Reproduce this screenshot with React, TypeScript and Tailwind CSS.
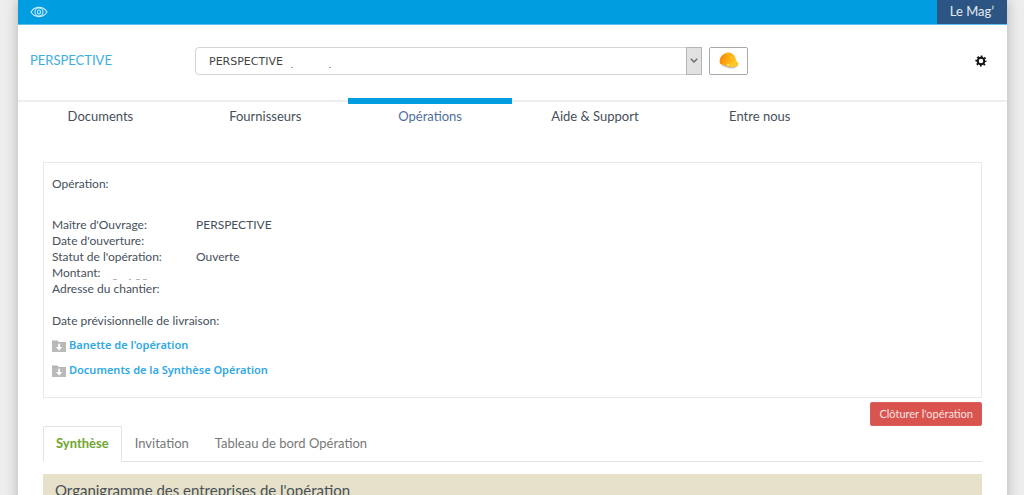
import React from "react";

const NAV = [
    { label: "Documents", active: false },
    { label: "Fournisseurs", active: false },
    { label: "Opérations", active: true },
    { label: "Aide & Support", active: false },
    { label: "Entre nous", active: false },
];

const DETAILS = [
    { label: "Maître d'Ouvrage:", value: "PERSPECTIVE" },
    { label: "Date d'ouverture:", value: "" },
    { label: "Statut de l'opération:", value: "Ouverte" },
    { label: "Montant:", value: "", masked: true },
    { label: "Adresse du chantier:", value: "" },
];

const LINKS = ["Banette de l'opération", "Documents de la Synthèse Opération"];

const TABS = [
    { label: "Synthèse", active: true },
    { label: "Invitation", active: false },
    { label: "Tableau de bord Opération", active: false },
];

const EyeIcon = () => (
    <svg viewBox="0 0 18 12" className="h-3 w-[18px]" fill="none" stroke="#c9ecfb" strokeWidth="1.1">
        <path d="M1 6C3 2.6 5.8 1.4 9 1.4S15 2.6 17 6c-2 3.4-4.8 4.6-8 4.6S3 9.4 1 6z" />
        <ellipse cx="9" cy="6" rx="4" ry="4" />
        <ellipse cx="9" cy="6" rx="1.5" ry="2" />
    </svg>
);

const HelmetIcon = () => (
    <svg viewBox="0 0 20 17" className="h-[17px] w-5">
        <defs>
            <linearGradient id="shell" x1="0" y1="0" x2="1" y2="0.3">
                <stop offset="0" stopColor="#f57a0a" />
                <stop offset="0.45" stopColor="#ffa70f" />
                <stop offset="1" stopColor="#ffc928" />
            </linearGradient>
        </defs>
        <path d="M2 13.5c4 1.5 8 3.3 11 3 3 0 5-1.5 6.5-3.5L14 11z" fill="#a9adb8" opacity="0.7" />
        <path d="M.7 10.5C.3 5.5 3.5 1.5 8 .7c5-.7 8.500 3 9.300 8.300l2 2.600c.4.9-.2 1.700-1.300 2.200-2 1-3.700 1.600-5.500 1.500C8.500 14.700 4.500 13.500 1.300 12z" fill="url(#shell)" />
        <path d="M8.500 12.300c2.500-.2 5.500-1.500 8.800-3.300l2 2.600c-1.800 1.700-4.500 2.800-7.300 2.700-1.500-.2-2.700-.8-3.500-2z" fill="#ffcb22" />
        <path d="M7 1.500c2.500.5 4.500 2.500 5 5.500" fill="none" stroke="#ffc02a" strokeWidth="1" />
        <circle cx="9" cy="12.700" r="1" fill="#fff0b0" />
    </svg>
);

const GearIcon = () => (
    <svg viewBox="0 0 12 12" className="h-3 w-3" fill="none" stroke="#111">
        <circle cx="6" cy="6" r="3.3" strokeWidth="2" />
        <circle cx="6" cy="6" r="4.8" strokeWidth="1.6" strokeDasharray="1.885 1.885" strokeDashoffset="0.94" />
    </svg>
);

const FolderIcon = () => (
    <svg viewBox="0 0 14 12" className="h-3 w-[14px]">
        <path d="M0 .5h5.500L6.500 2H14v1H0z" fill="#b5b5b5" />
        <path d="M0 3h14v9H0z" fill="#bababa" />
        <path d="M6.200 3.700h1.900v3.300h2.200L7.200 10.400 4 7h2.200z" fill="#fff" />
    </svg>
);

// Descenders left visible under the masked amount
const MaskedAmount = () => (
    <svg viewBox="0 0 38 2" className="ml-3 inline-block h-0.5 w-[38px] align-bottom" fill="#b4b8bc">
        <path d="M0 0h4v1H0zM16 0h2v1h-2zM23 0h4v1h-4zM30 0h4v1h-4z" />
    </svg>
);

export default function App() {
    return (
        <div className="min-h-screen bg-[#ededed] pl-[18px] pr-[17px] font-['Lato','Open_Sans',sans-serif] text-[13px] text-[#46505a]">
            <div className="min-h-screen bg-white shadow-[0_0_12px_rgba(0,0,0,0.25)]">
                <div className="flex h-[25px] items-stretch justify-between border-b border-[#5cbfec] bg-[#009de0]">
                    <button type="button" aria-label="Affichage" className="pl-3">
                        <EyeIcon />
                    </button>
                    <a href="#mag" className="flex items-center bg-[#2d5583] px-[13px] text-[#e3eaf2]">
                        Le Mag’
                    </a>
                </div>

                <header className="flex h-[75px] items-center px-3 pb-1">
                    <a href="#perspective" className="w-[165px] shrink-0 text-[#3bade4]">
                        PERSPECTIVE
                    </a>
                    <div className="relative w-[507px]">
                        <select
                            aria-label="Entreprise"
                            className="block h-7 w-full appearance-none rounded-sm border border-[#d4d4d4] bg-white pl-[13px] pr-5 pt-[3px] font-['DejaVu_Sans',sans-serif] text-[11px] text-[#444]"
                        >
                            <option>PERSPECTIVE</option>
                        </select>
                        <svg viewBox="0 0 42 2" className="pointer-events-none absolute bottom-[6px] left-24 h-0.5 w-[42px]" fill="#a5a5a5">
                            <path d="M0 0h2v1H0zM38 0h2v1h-2z" />
                        </svg>
                        <span className="pointer-events-none absolute inset-y-0 right-0 flex w-4 items-center justify-center border border-[#b5b5b5] bg-[#e1e1e1]">
                            <svg viewBox="0 0 8 5" className="h-[5px] w-2" fill="none" stroke="#666" strokeWidth="1.3">
                                <path d="M.8.8 4 4 7.200.8" />
                            </svg>
                        </span>
                    </div>
                    <button type="button" aria-label="Chantier" className="ml-[7px] flex h-7 w-[39px] items-center justify-center rounded-xs border border-[#a9a9a9] bg-white">
                        <HelmetIcon />
                    </button>
                    <button type="button" aria-label="Paramètres" className="ml-auto mr-2">
                        <GearIcon />
                    </button>
                </header>

                <nav className="grid grid-cols-6 border-t-2 border-[#eeeeee] leading-5">
                    {NAV.map((item) => (
                        <a
                            key={item.label}
                            href="#nav"
                            className={
                                item.active
                                    ? "-mt-1 border-t-6 border-[#009de0] pt-0.5 text-center text-[#4d6f9e]"
                                    : "pt-1 text-center"
                            }
                        >
                            {item.label}
                        </a>
                    ))}
                </nav>

                <main className="px-[25px] pt-9">
                    <section className="border border-[#e8e8e8] px-2 pb-[14px] pt-[11px] text-xs">
                        <p className="leading-5">Opération:</p>
                        <dl className="mt-[23px] grid grid-cols-[144px_1fr] leading-4">
                            {DETAILS.map((row) => (
                                <React.Fragment key={row.label}>
                                    <dt>
                                        {row.label}
                                        {row.masked && <MaskedAmount />}
                                    </dt>
                                    <dd>{row.value}</dd>
                                </React.Fragment>
                            ))}
                        </dl>
                        <p className="mt-4 leading-4">Date prévisionnelle de livraison:</p>
                        <ul className="mt-1 font-['Noto_Sans','Open_Sans',sans-serif] text-[11px] font-semibold text-[#2fa8e6]">
                            {LINKS.map((label) => (
                                <li key={label} className="h-[25px]">
                                    <a href="#dossier" className="flex h-full items-center gap-[3px]">
                                        <FolderIcon />
                                        {label}
                                    </a>
                                </li>
                            ))}
                        </ul>
                    </section>

                    <div className="flex justify-end pt-1">
                        <button type="button" className="h-6 rounded-xs border border-[#dc5f5b] bg-[#d9534f] px-2 text-[11px] text-[#fde4e2]">
                            Clôturer l'opération
                        </button>
                    </div>

                    <div role="tablist" className="flex border-b border-[#e2e2e2]">
                        {TABS.map((tab) => (
                            <button
                                key={tab.label}
                                type="button"
                                role="tab"
                                aria-selected={tab.active}
                                className={
                                    tab.active
                                        ? "-mb-px h-9 rounded-t-xs border border-[#e2e2e2] border-b-white bg-white px-3 font-bold text-[#6fa52f]"
                                        : "h-[35px] px-[13px] text-[#777]"
                                }
                            >
                                {tab.label}
                            </button>
                        ))}
                    </div>

                    <h2 className="mt-3 bg-[#e6e1c8] px-3 py-[7px] text-[15px] leading-[18px]">
                        Organigramme des entreprises de l'opération
                    </h2>
                </main>
            </div>
        </div>
    );
}
